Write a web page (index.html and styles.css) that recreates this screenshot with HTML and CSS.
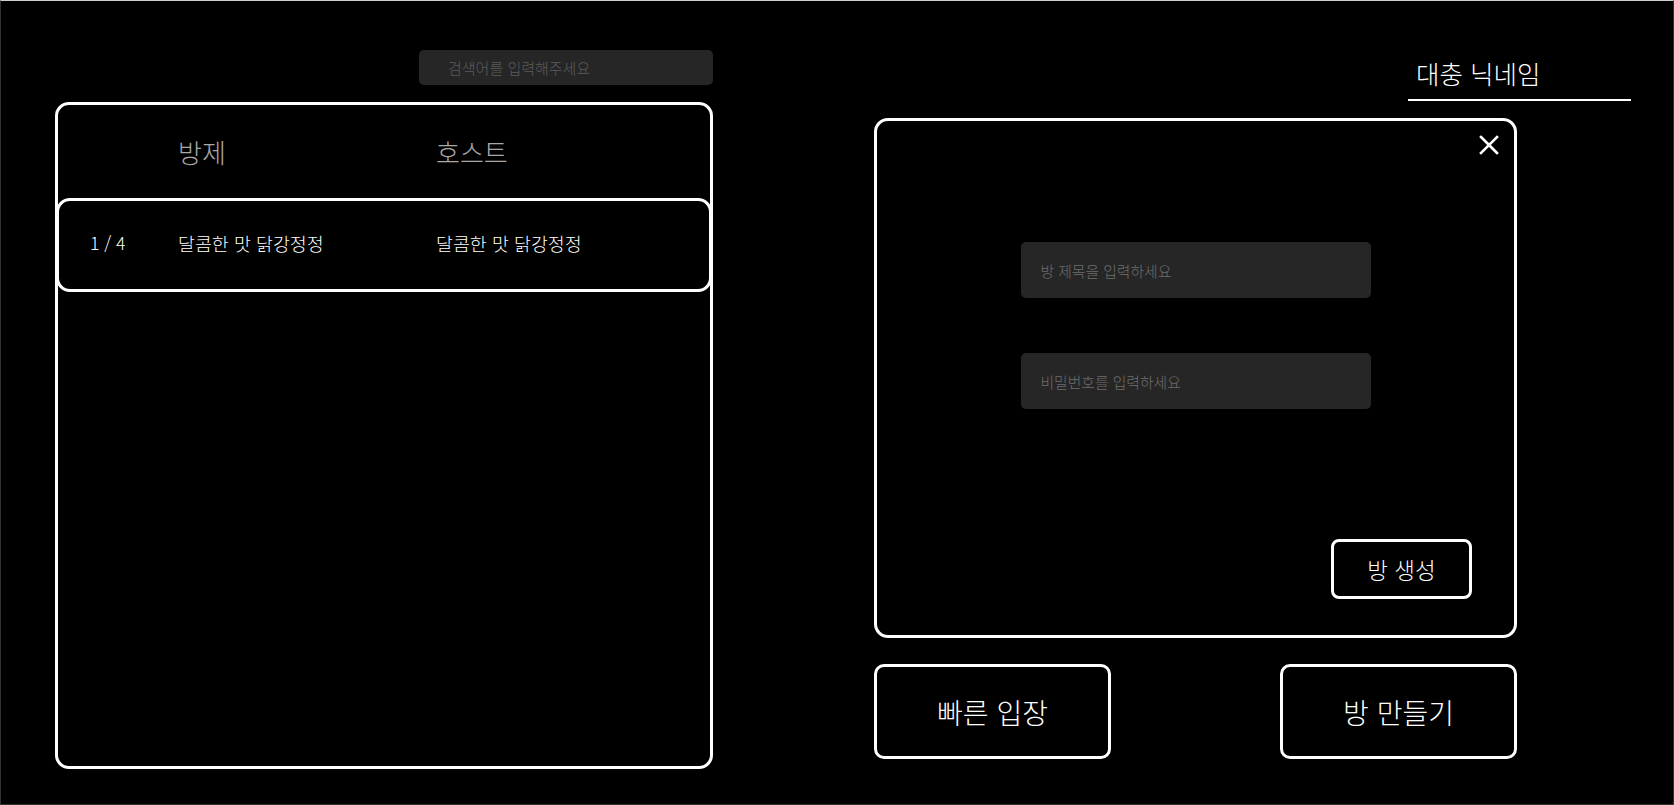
FILE: index.html
```html
<!DOCTYPE html>
<html lang="ko">
<head>
  <meta charset="UTF-8">
  <title>Lobby</title>
  <link rel="stylesheet" href="styles.css">
</head>
<body>
  <div class="screen">
    <!-- 방 목록 -->
    <div class="lobby-left">
      <input class="search-input" type="text" placeholder="검색어를 입력해주세요">

      <div class="room-list">
        <div class="room-head">
          <span></span>
          <span>방제</span>
          <span>호스트</span>
        </div>
        <div class="room-row">
          <span class="room-count">1 / 4</span>
          <span>달콤한 맛 닭강정정</span>
          <span>달콤한 맛 닭강정정</span>
        </div>
      </div>
    </div>

    <!-- 닉네임 + 방 생성 -->
    <div class="lobby-right">
      <div class="nickname">대충 닉네임</div>

      <div class="create-modal">
        <button class="close-button" aria-label="닫기">
          <svg width="20" height="20" viewBox="0 0 20 20">
            <path d="M2 2 L18 18 M18 2 L2 18" stroke="#fff" stroke-width="2.6" stroke-linecap="square" fill="none"/>
          </svg>
        </button>
        <input class="modal-input" type="text" placeholder="방 제목을 입력하세요">
        <input class="modal-input" type="password" placeholder="비밀번호를 입력하세요">
        <button class="create-button">방 생성</button>
      </div>

      <div class="action-buttons">
        <button class="action-button">빠른 입장</button>
        <button class="action-button">방 만들기</button>
      </div>
    </div>
  </div>
</body>
</html>
```

FILE: styles.css
```css
body {
  margin: 0;
  background-color: #000;
  font-family: "Noto Sans CJK KR", "Noto Sans", sans-serif;
  font-weight: 300;
  color: #fff;
}

.screen {
  box-sizing: border-box;
  height: 100vh;
  display: flex;
  padding-left: 54px;
  border: 1px solid #333;
  border-top-color: #cfcfcf;
}

.lobby-left {
  width: 658px;
  padding-top: 49px;
  display: flex;
  flex-direction: column;
}

.search-input {
  align-self: flex-end;
  box-sizing: border-box;
  width: 294px;
  height: 35px;
  padding: 0 0 0 29px;
  border: none;
  border-radius: 5px;
  background-color: #262626;
  color: #fff;
  font-family: inherit;
  font-weight: 300;
  font-size: 15px;
  outline: none;
}

.search-input::placeholder {
  color: #5c5c5c;
}

.room-list {
  box-sizing: border-box;
  height: 667px;
  margin-top: 17px;
  border: 3px solid #fff;
  border-radius: 14px;
}

.room-head {
  display: grid;
  grid-template-columns: 88px 258px 1fr;
  align-items: center;
  height: 93px;
  padding-left: 32px;
  font-size: 26px;
  color: #a8a8a8;
}

.room-row {
  box-sizing: border-box;
  display: grid;
  grid-template-columns: 88px 258px 1fr;
  align-items: center;
  height: 94px;
  margin: 0 -2px;
  padding: 0 0 5px 31px;
  border: 3px solid #fff;
  border-radius: 14px;
  font-size: 18.4px;
}

.room-count {
  font-size: 17.5px;
}

.lobby-right {
  width: 757px;
  margin-left: 161px;
  padding-top: 56px;
  display: flex;
  flex-direction: column;
}

.nickname {
  align-self: flex-end;
  box-sizing: border-box;
  width: 223px;
  padding: 0 0 10px 8px;
  border-bottom: 2px solid #fff;
  font-size: 25.5px;
  line-height: 32px;
}

.create-modal {
  position: relative;
  box-sizing: border-box;
  width: 643px;
  height: 520px;
  margin-top: 17px;
  padding: 121px 42px 36px;
  display: flex;
  flex-direction: column;
  align-items: center;
  border: 3px solid #fff;
  border-radius: 14px;
}

.close-button {
  position: absolute;
  top: 14px;
  right: 15px;
  width: 20px;
  height: 20px;
  padding: 0;
  border: none;
  background: none;
  cursor: pointer;
}

.close-button svg {
  display: block;
}

.modal-input {
  box-sizing: border-box;
  width: 350px;
  height: 56px;
  margin-bottom: 55px;
  padding: 0 0 0 20px;
  border: none;
  border-radius: 5px;
  background-color: #262626;
  color: #fff;
  font-family: inherit;
  font-weight: 300;
  font-size: 14.8px;
  outline: none;
}

.modal-input::placeholder {
  color: #6e6e6e;
}

.create-button {
  align-self: flex-end;
  margin-top: auto;
  box-sizing: border-box;
  width: 141px;
  height: 60px;
  border: 3px solid #fff;
  border-radius: 8px;
  background-color: #000;
  color: #fff;
  font-family: inherit;
  font-weight: 300;
  font-size: 22.5px;
  cursor: pointer;
}

.action-buttons {
  width: 643px;
  margin-top: 26px;
  display: flex;
  justify-content: space-between;
}

.action-button {
  box-sizing: border-box;
  width: 237px;
  height: 95px;
  border: 3px solid #fff;
  border-radius: 10px;
  background-color: #000;
  color: #fff;
  font-family: inherit;
  font-weight: 300;
  font-size: 28px;
  cursor: pointer;
}
```
